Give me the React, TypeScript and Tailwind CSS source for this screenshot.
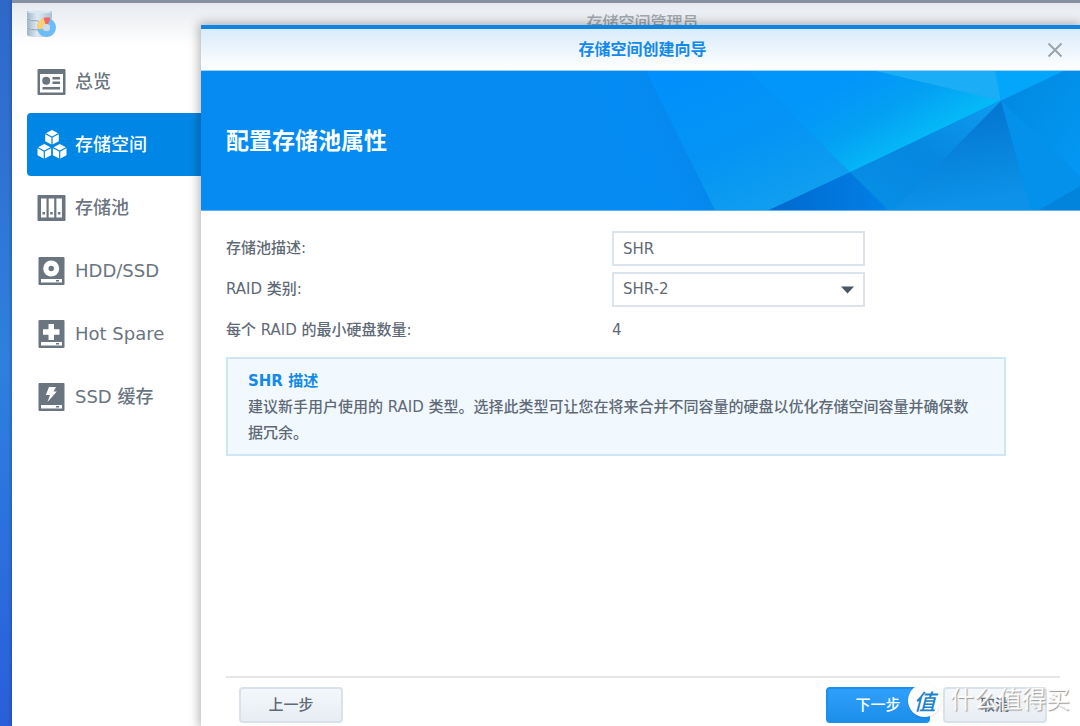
import { useState } from "react";

const FONT = "font-['DejaVu_Sans','Noto_Sans_CJK_SC',sans-serif]";

function LogoIcon() {
    return (
        <svg width="30" height="29" viewBox="0 0 30 29" aria-hidden="true">
            <defs>
                <linearGradient id="disk" x1="0" x2="1" y1="0" y2="0">
                    <stop offset="0" stopColor="#9fb4c6" />
                    <stop offset="0.4" stopColor="#dfeaf3" />
                    <stop offset="1" stopColor="#a9c0d2" />
                </linearGradient>
            </defs>
            <path d="M0 1h25v7q0 2-12 2T0 8z" fill="url(#disk)" />
            <path d="M0 9q4 2 12 2t13-2v8q0 2-12 2T0 17z" fill="url(#disk)" />
            <path d="M0 18q4 2 12 2t13-2v7q0 2-12 2T0 25z" fill="url(#disk)" />
            <ellipse cx="12.5" cy="2" rx="12.5" ry="1.5" fill="#dbe7f0" />
            <path d="M0 9q4 2 12 2M0 18q4 2 12 2" fill="none" stroke="#8fa3b4" strokeWidth="1" />
            <circle cx="19.5" cy="17.500" r="6.500" fill="none" stroke="#6cbcf8" strokeWidth="6" />
            <path d="M10 19A10 10 0 0 1 17 8L19 14.500Q16 16 15.500 19z" fill="#fbd070" />
            <path d="M16.500 8Q20 6.500 23.500 8L21 14h-2.500z" fill="#f26469" />
            <circle cx="19.500" cy="17.500" r="3.500" fill="#cfdde8" />
        </svg>
    );
}

function OverviewIcon() {
    return (
        <svg width="30" height="28" viewBox="0 0 30 28" aria-hidden="true">
            <path fillRule="evenodd" fill="currentColor" d="M1.500 1h26q1 0 1 1v24q0 1-1 1h-26q-1 0-1-1V2q0-1 1-1zM3 6v18.500h23V6z" />
            <circle cx="9.200" cy="12.700" r="4" fill="currentColor" />
            <path fill="currentColor" d="M15.500 9h7.500v2.500h-7.500zM15.500 13.500h7.500v2.500h-7.500zM5.500 19h17.500v2.500h-17.500z" />
        </svg>
    );
}

function Cube({ x, y }: { x: number; y: number }) {
    return (
        <g transform={`translate(${x} ${y})`} fill="currentColor">
            <path d="M7 0l6.200 3.200L7 6.400.800 3.200z" />
            <path d="M.200 4.200l6.200 3.200v7L.200 11.200z" />
            <path d="M13.800 4.200L7.600 7.400v7l6.200-3.200z" />
        </g>
    );
}

function VolumeIcon() {
    return (
        <svg width="30" height="30" viewBox="0 0 30 30" aria-hidden="true">
            <Cube x={8} y={0} />
            <Cube x={0.3} y={14} />
            <Cube x={15.700} y={14} />
        </svg>
    );
}

function PoolIcon() {
    return (
        <svg width="30" height="28" viewBox="0 0 30 28" aria-hidden="true">
            <path fillRule="evenodd" fill="currentColor" d="M1.500 1h26q1 0 1 1v24q0 1-1 1h-26q-1 0-1-1V2q0-1 1-1zM4 4.500v19h5.500v-19zM11.700 4.500v19h5.500v-19zM19.400 4.500v19h5.500v-19z" />
            <path fill="currentColor" d="M5.500 18h2.500v2.500H5.500zM13.200 18h2.500v2.500h-2.500zM20.900 18h2.500v2.500h-2.500z" />
        </svg>
    );
}

// corpo do disco, usado pelos tres itens de hardware
function DriveIcon({ kind }: { kind: "disk" | "plus" | "bolt" }) {
    return (
        <svg width="30" height="28" viewBox="0 0 30 28" aria-hidden="true">
            <rect x="1.500" y="0" width="26" height="28" rx="1" fill="currentColor" />
            <rect x="4" y="22" width="21" height="3.500" fill="#fff" />
            <rect x="19" y="23" width="3" height="1.500" fill="currentColor" />
            {kind === "disk" && (
                <>
                    <circle cx="14.200" cy="11.500" r="8" fill="#fff" />
                    <circle cx="14.200" cy="11.500" r="2.700" fill="currentColor" />
                </>
            )}
            {kind === "plus" && <path fill="#fff" d="M11.500 4h5.500v5.300h5.500v5.400H17V20h-5.500v-5.300H6V9.300h5.500z" />}
            {kind === "bolt" && <path fill="#fff" d="M12 4h7l-2.500 4.500h3.300L10.500 19l2.500-7H8.800z" />}
        </svg>
    );
}

const MENU = [
    { label: "总览", icon: <OverviewIcon /> },
    { label: "存储空间", icon: <VolumeIcon /> },
    { label: "存储池", icon: <PoolIcon /> },
    { label: "HDD/SSD", icon: <DriveIcon kind="disk" /> },
    { label: "Hot Spare", icon: <DriveIcon kind="plus" /> },
    { label: "SSD 缓存", icon: <DriveIcon kind="bolt" /> },
];

function Sidebar() {
    return (
        <aside className="w-[189px] shrink-0 pl-[15px]">
            <div className="h-[47px] pt-[7px]">
                <LogoIcon />
            </div>
            <nav>
                {MENU.map((item, i) => (
                    <button
                        key={item.label}
                        className={
                            "flex h-[63px] w-full items-center gap-2 rounded-l pl-[10px] text-left text-[18px] font-medium whitespace-nowrap " +
                            (i === 1 ? "bg-[#0086e5] text-white" : "text-[#6a7580]")
                        }
                    >
                        {item.icon}
                        <span>{item.label}</span>
                    </button>
                ))}
            </nav>
        </aside>
    );
}

/* Fundo facetado da faixa azul */
function BannerArt() {
    return (
        <svg className="absolute inset-y-0 right-0 h-full w-[520px]" viewBox="0 0 520 140" preserveAspectRatio="none" aria-hidden="true">
            <defs>
                <linearGradient id="f1" gradientUnits="userSpaceOnUse" x1="0" y1="50" x2="125" y2="0">
                    <stop offset="0" stopColor="#058bf2" />
                    <stop offset="0.5" stopColor="#058cf4" />
                    <stop offset="1" stopColor="#0586e9" />
                </linearGradient>
                <linearGradient id="f2" x1="0" x2="0.600" y1="0" y2="1">
                    <stop offset="0" stopColor="#008ffd" />
                    <stop offset="0.600" stopColor="#0594f4" />
                    <stop offset="1" stopColor="#109ef0" />
                </linearGradient>
                <linearGradient id="f3" gradientUnits="userSpaceOnUse" x1="310" y1="0" x2="352" y2="75">
                    <stop offset="0" stopColor="#0396fa" />
                    <stop offset="0.500" stopColor="#04a0f3" />
                    <stop offset="1" stopColor="#05b9f7" />
                </linearGradient>
                <linearGradient id="f4" x1="0" x2="1" y1="1" y2="0">
                    <stop offset="0" stopColor="#0690e6" />
                    <stop offset="0.500" stopColor="#0687e0" />
                    <stop offset="1" stopColor="#0e9df0" />
                </linearGradient>
                <linearGradient id="f5" x1="0" x2="0.200" y1="0" y2="1">
                    <stop offset="0" stopColor="#0270cb" />
                    <stop offset="1" stopColor="#0c92e8" />
                </linearGradient>
                <linearGradient id="f6" x1="0" x2="1" y1="0" y2="1">
                    <stop offset="0" stopColor="#0187df" />
                    <stop offset="1" stopColor="#0399f5" />
                </linearGradient>
                <linearGradient id="f7" x1="0" x2="1" y1="0" y2="0">
                    <stop offset="0" stopColor="#0069cf" />
                    <stop offset="1" stopColor="#0280e6" />
                </linearGradient>
            </defs>
            <path d="M0 0H88L155 140H0z" fill="url(#f1)" />
            <path d="M86 0H196L290 102L209 140H155z" fill="url(#f2)" />
            <path d="M190 0H440V30L290 102z" fill="url(#f3)" />
            <path d="M316 0H436L441 30z" fill="#1badf5" />
            <path d="M435 0H504L441 30z" fill="#03a6fb" />
            <path d="M504 0H520V115L441 30z" fill="url(#f6)" />
            <path d="M441 30L520 106V140H471z" fill="#0491ec" />
            <path d="M441 30L471 140H333z" fill="url(#f5)" />
            <path d="M441 30L333 140H328L290 102z" fill="url(#f4)" />
            <path d="M290 102L328 140H209z" fill="url(#f7)" />
            <path d="M520 116V140H479z" fill="#0284dc" />
        </svg>
    );
}

function Watermark() {
    return (
        <div className="pointer-events-none absolute right-[10px] bottom-[9px] flex items-center gap-[9px]">
            <span className="flex size-[33px] items-center justify-center rounded-full bg-white font-['Noto_Sans_CJK_SC',sans-serif] text-[22px] leading-none font-medium text-[#1b83cb] italic shadow">
                值
            </span>
            <span className="text-[24px] leading-[34px] text-white/90 [text-shadow:1px_1px_1px_#999]">什么值得买</span>
        </div>
    );
}

const GREY_BTN =
    "h-[36px] w-[104px] rounded border-2 border-[#d9e1ea] bg-linear-to-b from-[#f4f8fc] to-[#e8edf3] text-[15px] font-medium text-[#5f6a76]";

function Wizard() {
    const [desc, setDesc] = useState("SHR");
    const [raid, setRaid] = useState("SHR-2");

    return (
        <section className="flex flex-1 flex-col border-t-4 border-[#0e84e3] bg-white shadow-[0_0_10px_2px_rgba(0,0,0,0.3)]">
            <header className="relative flex h-[42px] items-center justify-center border-b border-[#9fd0f8] bg-linear-to-b from-[#d9ebfa] to-white pl-1">
                <h1 className="text-[16px] font-bold text-[#148ae8]">存储空间创建向导</h1>
                <button aria-label="关闭" className="absolute right-[17px] text-[#97a2ad]">
                    <svg width="16" height="16" viewBox="0 0 16 16" aria-hidden="true">
                        <path d="M1.500 1.500l13 13M14.500 1.500l-13 13" stroke="currentColor" strokeWidth="1.800" />
                    </svg>
                </button>
            </header>

            <div className="relative flex h-[140px] items-center border-b border-[#5fb2f6] bg-[#058bf2] pl-[25px]">
                <BannerArt />
                <h2 className="relative pt-[2px] text-[23px] font-bold text-white">配置存储池属性</h2>
            </div>

            <div className="flex-1 pt-5 pr-5 pl-[25px] text-[15px] font-medium text-[#5f6a76]">
                <div className="grid grid-cols-[386px_253px] items-center gap-y-[6px]">
                    <label htmlFor="desc">存储池描述:</label>
                    <input
                        id="desc"
                        value={desc}
                        onChange={(e) => setDesc(e.target.value)}
                        className="h-[35px] w-full border-2 border-[#dbe4ec] bg-white px-[9px] outline-none"
                    />
                    <label htmlFor="raid">RAID 类别:</label>
                    <div className="relative">
                        <select
                            id="raid"
                            value={raid}
                            onChange={(e) => setRaid(e.target.value)}
                            className="block h-[35px] w-full appearance-none border-2 border-[#dbe4ec] bg-white px-[9px] outline-none"
                        >
                            <option>SHR-2</option>
                            <option>SHR</option>
                        </select>
                        <svg className="pointer-events-none absolute top-[14px] right-[11px]" width="13" height="8" viewBox="0 0 13 8" aria-hidden="true">
                            <path d="M0 .500h13L6.500 7.500z" fill="#4a5763" />
                        </svg>
                    </div>
                    <span className="leading-[35px]">每个 RAID 的最小硬盘数量:</span>
                    <span>4</span>
                </div>

                <div className="mt-[9px] max-w-[780px] border-2 border-[#cfe6f6] bg-[#f1f8fe] pt-[9px] pb-2 pr-[24px] pl-[20px] leading-[26px]">
                    <h3 className="font-bold text-[#148ae8]">SHR 描述</h3>
                    <p>建议新手用户使用的 RAID 类型。选择此类型可让您在将来合并不同容量的硬盘以优化存储空间容量并确保数据冗余。</p>
                </div>
            </div>

            <footer className="mr-5 ml-[25px] flex gap-[13px] border-t-2 border-[#e4e6e8] px-[13px] pt-[9px] pb-[3px]">
                <button className={GREY_BTN + " mr-auto"}>上一步</button>
                <button className="h-[36px] w-[104px] rounded border-2 border-[#1a90ec] bg-linear-to-b from-[#2fa0fa] to-[#1c8fea] text-[15px] font-medium text-white">
                    下一步
                </button>
                <button className={GREY_BTN}>取消</button>
            </footer>
        </section>
    );
}

export default function App() {
    return (
        <main className={"relative min-h-screen overflow-hidden bg-linear-to-b from-[#2f68c8] via-[#2f80de] to-[#2a5edb] pl-3 " + FONT}>
            <div className="flex min-h-screen border-t-[3px] border-[#8790a3] bg-white bg-linear-to-b from-[#e6eaef] to-white to-[42px] shadow-[0_0_4px_rgba(0,0,0,0.35)]">
                <Sidebar />
                <div className="flex min-w-0 flex-1 flex-col">
                    <div className="h-[22px] overflow-hidden pl-1 text-center text-[16px] leading-[40px] font-medium text-[#a3a9b1]">存储空间管理员</div>
                    <Wizard />
                </div>
            </div>
            <Watermark />
        </main>
    );
}
